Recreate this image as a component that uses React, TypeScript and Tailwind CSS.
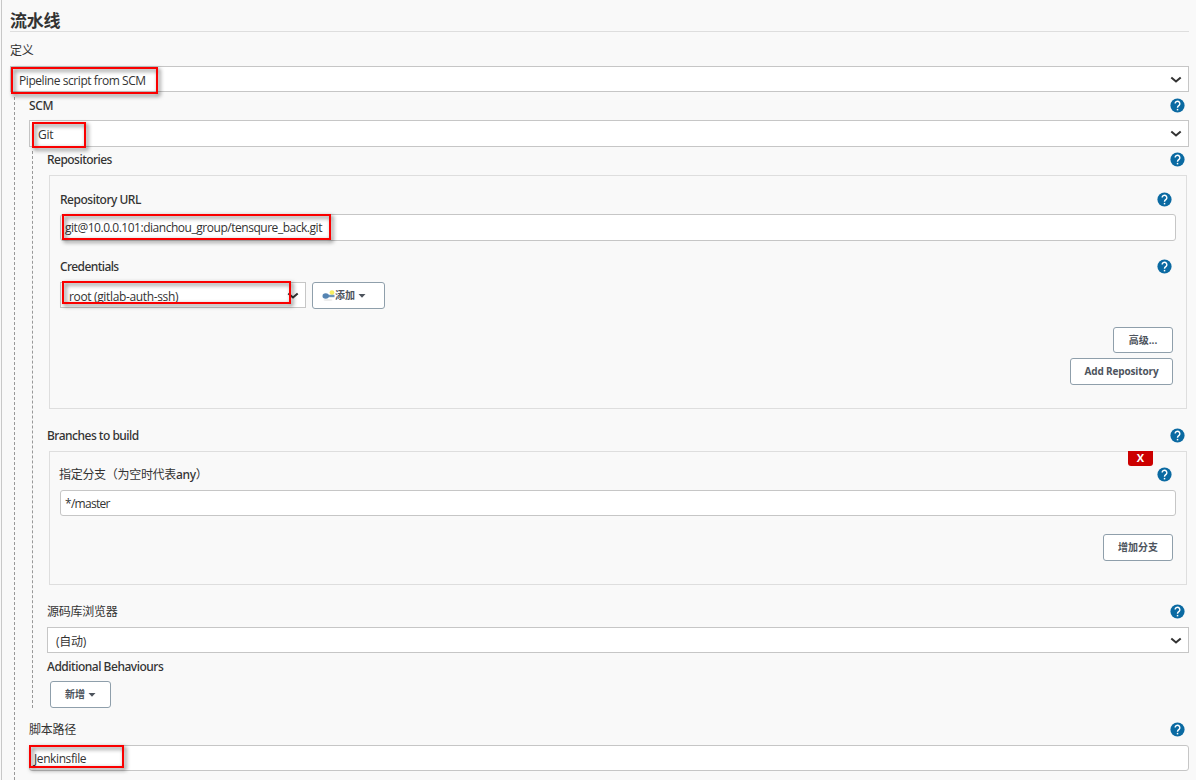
import type { ReactNode } from "react";
import clsx from "clsx";

function HelpIcon() {
  return (
    <svg viewBox="0 0 24 24" className="h-[17px] w-[17px] shrink-0" fill="#0b6aa2">
      <circle cx="12" cy="12" r="10" />
      <path d="M8.7 9.3a3.3 3.3 0 1 1 5.5 2.5c-1.2 1-2.2 1.5-2.2 3.2" fill="none" stroke="#fff" strokeWidth="2" />
      <rect x="11" y="16.8" width="2.1" height="2.1" fill="#fff" />
    </svg>
  );
}

function Chevron({ className }: { className?: string }) {
  return (
    <svg viewBox="0 0 12 8" className={clsx("h-2 w-3 shrink-0", className)} fill="none" stroke="#333" strokeWidth="2">
      <path d="M1.3 1.4 6 5.5l4.7-4.1" />
    </svg>
  );
}

function Caret() {
  return (
    <svg viewBox="0 0 8 4" className="h-1 w-2 shrink-0" fill="#4d545d">
      <path d="M.5 0h7L4 3.8z" />
    </svg>
  );
}

function KeyIcon() {
  return (
    <svg viewBox="0 0 14 12" className="h-3 w-3.5 shrink-0">
      <ellipse cx="6" cy="10" rx="4.5" ry="1" fill="#ececec" />
      <circle cx="10" cy="2.6" r="2.4" fill="#f7ef62" />
      <path d="M5 4.8h7.5v2.4H5z" fill="#6f96b8" />
      <ellipse cx="3.7" cy="6" rx="3.2" ry="2.7" fill="#5584b2" />
    </svg>
  );
}

function Label({ children, help = true, className }: { children: ReactNode; help?: boolean; className?: string }) {
  return (
    <div className={clsx("flex items-center justify-between text-xs", className)}>
      <span className="whitespace-nowrap">{children}</span>
      {help && <HelpIcon />}
    </div>
  );
}

function Select({ children, className, textClass }: { children: ReactNode; className?: string; textClass?: string }) {
  return (
    <div className={clsx("relative flex justify-between border border-[#c6c6c6] bg-white pr-1.5 pl-2 text-xs", className)}>
      <span className={clsx("whitespace-nowrap", textClass)}>{children}</span>
      <Chevron className="mt-[9px]" />
    </div>
  );
}

function Input({ value, className, children }: { value: string; className?: string; children?: ReactNode }) {
  return (
    <div className={clsx("relative flex items-center rounded-[3px] border border-[#c6c6c6] bg-white px-1 text-xs", className)}>
      <span className="whitespace-nowrap">{value}</span>
      {children}
    </div>
  );
}

function Button({ children, className }: { children: ReactNode; className?: string }) {
  return (
    <button className={clsx("flex shrink-0 items-center rounded-[3px] border border-[#8f9fab] bg-white text-[10px] font-bold whitespace-nowrap text-[#4d545d]", className)}>
      {children}
    </button>
  );
}

// red frame laid over a field
function Mark({ className }: { className: string }) {
  return <div className={clsx("pointer-events-none absolute z-10 border-2 border-[#fa0000] drop-shadow-[2px_2px_2px_rgba(0,0,0,0.6)]", className)} />;
}

export default function App() {
  return (
    <div className="h-[780px] overflow-hidden bg-[#f9f9f9] pl-px font-['Open_Sans','Noto_Sans_CJK_SC',sans-serif] text-[#333]">
      <div className="h-full border-l border-[#c8c8c8] pr-[7px] pl-2">
        <h2 className="h-8 border-b border-[#dedede] pt-2 text-[17px] leading-[26px] font-bold tracking-[-0.2px]">流水线</h2>
        <Label help={false} className="h-[34px] pt-1 tracking-[-0.2px]">定义</Label>
        <div className="relative">
          <Select className="h-[26px]" textClass="leading-[28px] tracking-[-0.43px]">Pipeline script from SCM</Select>
          <Mark className="top-px left-px h-[27px] w-[147px]" />
        </div>

        <div className="mt-[5px] ml-1 h-[683px] border-l border-dashed border-[#999] pl-3.5">
          <Label className="h-[23px] pr-[3px] pb-1.5 font-['Noto_Sans'] font-medium tracking-[-0.4px]">SCM</Label>
          <div className="relative">
            <Select className="h-[27px]" textClass="leading-[27px] tracking-[-0.2px]">Git</Select>
            <Mark className="top-0.5 left-[3px] h-[26px] w-[54px]" />
          </div>

          <div className="mt-1 ml-[3px] h-[557px] border-l border-dashed border-[#999] pl-3.5">
            <Label className="h-6 pr-[3px] pb-[7px] font-['Noto_Sans'] font-medium tracking-[-0.53px]">Repositories</Label>
            <div className="mr-0.5 ml-0.5 h-[234px] border border-[#dedede] px-2.5">
              <Label className="h-[38px] pt-[9px] pr-[3px] font-['Noto_Sans'] font-medium tracking-[-0.48px]">Repository URL</Label>
              <Input value="git@10.0.0.101:dianchou_group/tensqure_back.git" className="h-[27px] tracking-[-0.47px]">
                <Mark className="-top-px left-px h-[26px] w-[269px]" />
              </Input>
              <Label className="h-[41px] pt-2.5 pr-[3px] font-['Noto_Sans'] font-medium tracking-[-0.58px]">Credentials</Label>
              <div className="flex items-start gap-1.5">
                <div className="relative w-[246px]">
                  <Select className="h-[26px]" textClass="leading-[28px] tracking-[-0.35px]">root (gitlab-auth-ssh)</Select>
                  <Mark className="-top-px left-0.5 h-[23px] w-[229px]" />
                </div>
                <Button className="h-[27px] w-[73px] pl-[9px]">
                  <KeyIcon />
                  <span className="mr-[3px] -ml-px">添加</span>
                  <Caret />
                </Button>
              </div>
              <div className="mt-[18px] flex flex-col items-end gap-[5px] pr-[3px]">
                <Button className="h-[26px] w-[60px] justify-center">高级...</Button>
                <Button className="h-[27px] w-[103px] justify-center tracking-[-0.15px]">Add Repository</Button>
              </div>
            </div>

            <Label className="h-[42px] pt-[11px] pr-[3px] font-['Noto_Sans'] font-medium tracking-[-0.5px]">Branches to build</Label>
            <div className="relative mr-0.5 ml-0.5 h-[134px] border border-[#dedede] px-2.5">
              <button className="absolute -top-px right-[33px] flex h-[15px] w-[25px] items-center justify-center rounded-b-[3px] bg-[#c00] text-[11px] font-bold text-white">X</button>
              <Label className="-ml-px h-[38px] pt-[7px] pr-[3px] tracking-[-0.3px]">
                指定分支（为空时代表<span className="font-['Noto_Sans'] font-medium">any</span>）
              </Label>
              <Input value="*/master" className="h-[26px] pt-px tracking-[-0.7px]" />
              <div className="mt-[18px] flex justify-end pr-[3px]">
                <Button className="h-[27px] w-[70px] justify-center">增加分支</Button>
              </div>
            </div>

            <Label className="h-[42px] pt-[11px] pr-[3px] tracking-[-0.25px]">源码库浏览器</Label>
            <Select className="h-[26px]" textClass="leading-[28px] tracking-[-0.25px]">(自动)</Select>
            <Label help={false} className="h-7 font-['Noto_Sans'] font-medium tracking-[-0.48px]">Additional Behaviours</Label>
            <Button className="ml-[3px] h-[27px] w-[61px] justify-center gap-[3px]">
              新增
              <Caret />
            </Button>
          </div>

          <Label className="h-[37px] pt-1.5 pr-[3px] tracking-[-0.25px]">脚本路径</Label>
          <Input value="Jenkinsfile" className="h-[26px] pt-px tracking-[-0.4px]">
            <Mark className="-top-px -left-px h-[23px] w-[95px]" />
          </Input>
        </div>
      </div>
    </div>
  );
}
